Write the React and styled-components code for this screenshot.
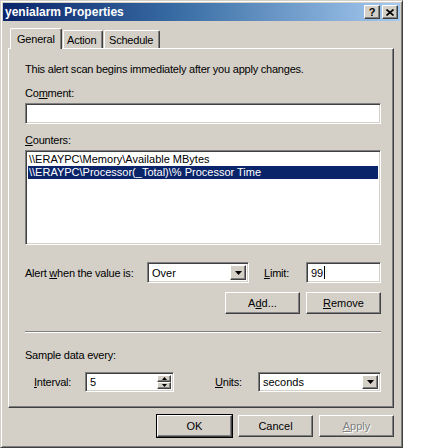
import React from 'react';
import styled, { createGlobalStyle } from 'styled-components';

const Global = createGlobalStyle`
  html, body { margin: 0; padding: 0; background: #ffffff; }
  body { font-family: "Liberation Sans", Arial, sans-serif; font-size: 11px; color: #000; }
  #root { width: 431px; height: 448px; }
  * { box-sizing: border-box; }
`;

const sunken = `
  border: 1px solid;
  border-color: #808080 #ffffff #ffffff #808080;
  box-shadow: inset 1px 1px 0 #404040, inset -1px -1px 0 #d4d0c8;
  background: #ffffff;
`;

const raised = `
  border: 1px solid;
  border-color: #ffffff #404040 #404040 #ffffff;
  box-shadow: inset -1px -1px 0 #808080, inset 1px 1px 0 #d4d0c8;
  background: #d4d0c8;
`;

const Window = styled.div`
  width: 403px;
  height: 448px;
  background: #d4d0c8;
  border: 1px solid;
  border-color: #d4d0c8 #404040 #404040 #d4d0c8;
  box-shadow: inset 1px 1px 0 #ffffff, inset -1px -1px 0 #808080;
  padding: 2px;
  display: flex;
  flex-direction: column;
`;

const TitleBar = styled.div`
  height: 18px;
  display: flex;
  align-items: center;
  justify-content: space-between;
  padding: 0 2px 0 2px;
  background: linear-gradient(to right, #0a246a 0%, #3a6ea5 45%, #a6caf0 100%);
`;

const Title = styled.span`
  color: #ffffff;
  font-weight: bold;
  font-size: 12px;
`;

const TitleButtons = styled.div`
  display: flex;
  gap: 2px;
`;

const TitleButton = styled.div`
  ${raised}
  width: 16px;
  height: 14px;
  display: flex;
  align-items: center;
  justify-content: center;
  font-weight: bold;
  font-size: 11px;
  line-height: 1;
  color: #000;
`;

const TabStrip = styled.div`
  margin: 7px 6px 0 5px;
  height: 20px;
  display: flex;
  align-items: flex-end;
  padding-left: 2px;
  position: relative;
  z-index: 1;
  letter-spacing: -0.2px;
`;

const Tab = styled.div`
  width: ${p => p.w}px;
  height: ${p => (p.active ? 21 : 18)}px;
  margin-bottom: ${p => (p.active ? -1 : 0)}px;
  margin-right: 1px;
  padding-left: ${p => p.pad}px;
  display: flex;
  align-items: ${p => (p.active ? 'flex-start' : 'center')};
  padding-top: ${p => (p.active ? 4 : 0)}px;
  background: #d4d0c8;
  border-top: 1px solid #ffffff;
  border-left: 1px solid #ffffff;
  border-right: 1px solid #404040;
  box-shadow: inset -1px 0 0 #808080;
  border-radius: 2px 2px 0 0;
`;

const Panel = styled.div`
  margin: 0 6px 0 5px;
  height: 360px;
  border: 1px solid;
  border-color: #ffffff #404040 #404040 #ffffff;
  box-shadow: inset -1px -1px 0 #808080;
  padding: 14px 12px 0 16px;
  display: flex;
  flex-direction: column;
  letter-spacing: -0.22px;
`;

const Text = styled.div`
  line-height: 13px;
  height: 13px;
  margin-top: ${p => p.mt || 0}px;
  white-space: nowrap;
`;

const Field = styled.div`
  ${sunken}
  height: ${p => p.h || 21}px;
  width: ${p => (p.w ? `${p.w}px` : 'auto')};
  margin-top: ${p => p.mt || 0}px;
  flex-shrink: 0;
  position: relative;
  display: flex;
  align-items: center;
  padding-left: 4px;
  white-space: nowrap;
  letter-spacing: 0;
`;

const ListBox = styled.div`
  ${sunken}
  height: 95px;
  margin-top: 3px;
  padding: 2px 2px;
  display: flex;
  flex-direction: column;
  letter-spacing: 0;
`;

const ListItem = styled.div`
  height: 13px;
  line-height: 13px;
  padding-left: 1px;
  white-space: nowrap;
  background: ${p => (p.selected ? '#0a246a' : 'transparent')};
  color: ${p => (p.selected ? '#ffffff' : '#000000')};
`;

const Row = styled.div`
  display: flex;
  align-items: center;
  height: ${p => p.h || 21}px;
  margin-top: ${p => p.mt || 0}px;
  padding-left: ${p => p.pl || 0}px;
  justify-content: ${p => p.justify || 'flex-start'};
  gap: ${p => p.gap || 0}px;
`;

const Label = styled.span`
  width: ${p => p.w}px;
  margin-left: ${p => p.ml || 0}px;
  flex-shrink: 0;
  white-space: nowrap;
`;

const ArrowButton = styled.div`
  ${raised}
  position: absolute;
  right: 2px;
  top: 2px;
  bottom: 2px;
  width: 16px;
  display: flex;
  align-items: center;
  justify-content: center;
`;

const SpinGroup = styled.div`
  position: absolute;
  right: 2px;
  top: 2px;
  bottom: 2px;
  width: 14px;
  display: flex;
  flex-direction: column;
`;

const SpinButton = styled.div`
  ${raised}
  flex: 1;
  display: flex;
  align-items: center;
  justify-content: center;
`;

const Button = styled.div`
  ${raised}
  width: 75px;
  height: ${p => p.h || 22}px;
  display: flex;
  align-items: center;
  justify-content: center;
  letter-spacing: 0;
  color: ${p => (p.disabled ? '#808080' : '#000')};
  text-shadow: ${p => (p.disabled ? '1px 1px 0 #ffffff' : 'none')};
  outline: ${p => (p.def ? '1px solid #000' : 'none')};
  outline-offset: 0;
`;

const Separator = styled.div`
  margin-top: 17px;
  border-top: 1px solid #808080;
  border-bottom: 1px solid #ffffff;
`;

const Footer = styled.div`
  display: flex;
  justify-content: flex-end;
  gap: 6px;
  margin: 7px 6px 0 0;
`;

const Caret = styled.span`
  display: inline-block;
  width: 1px;
  height: 13px;
  background: #000;
  margin-left: 1px;
`;

const Down = () => (
  <svg width="7" height="4" viewBox="0 0 7 4"><path d="M0 0h7L3.5 4z" fill="#000" /></svg>
);
const Tri = ({ up }) => (
  <svg width="5" height="3" viewBox="0 0 5 3">
    <path d={up ? 'M2.5 0L5 3H0z' : 'M0 0h5L2.5 3z'} fill="#000" />
  </svg>
);

export default function App() {
  return (
    <>
      <Global />
      <Window>
        <TitleBar>
          <Title>yenialarm Properties</Title>
          <TitleButtons>
            <TitleButton>?</TitleButton>
            <TitleButton>
              <svg width="8" height="7" viewBox="0 0 8 7">
                <path d="M0.5 0.5L7.5 6.5M7.5 0.5L0.5 6.5" stroke="#000" strokeWidth="1.6" />
              </svg>
            </TitleButton>
          </TitleButtons>
        </TitleBar>

        <TabStrip>
          <Tab active w={52} pad={6}>General</Tab>
          <Tab w={40} pad={3}>Action</Tab>
          <Tab w={56} pad={4}>Schedule</Tab>
        </TabStrip>

        <Panel>
          <Text>This alert scan begins immediately after you apply changes.</Text>
          <Text mt={11}>Co<u>m</u>ment:</Text>
          <Field mt={3} />
          <Text mt={10}><u>C</u>ounters:</Text>
          <ListBox>
            <ListItem>\\ERAYPC\Memory\Available MBytes</ListItem>
            <ListItem selected>\\ERAYPC\Processor(_Total)\% Processor Time</ListItem>
          </ListBox>

          <Row mt={17}>
            <Label w={122}>Alert <u>w</u>hen the value is:</Label>
            <Field w={102}>
              Over
              <ArrowButton><Down /></ArrowButton>
            </Field>
            <Label w={42} ml={15}><u>L</u>imit:</Label>
            <Field w={75}>99<Caret /></Field>
          </Row>

          <Row mt={9} h={22} justify="flex-end" gap={6}>
            <Button>A<u>d</u>d...</Button>
            <Button><u>R</u>emove</Button>
          </Row>

          <Separator />

          <Text mt={16}>Sample data every:</Text>

          <Row mt={10} h={20} pl={9}>
            <Label w={51}><u>I</u>nterval:</Label>
            <Field w={89} h={20}>
              5
              <SpinGroup>
                <SpinButton><Tri up /></SpinButton>
                <SpinButton><Tri /></SpinButton>
              </SpinGroup>
            </Field>
            <Label w={43} ml={41}><u>U</u>nits:</Label>
            <Field w={123} h={20}>
              seconds
              <ArrowButton><Down /></ArrowButton>
            </Field>
          </Row>
        </Panel>

        <Footer>
          <Button def>OK</Button>
          <Button>Cancel</Button>
          <Button disabled><u>A</u>pply</Button>
        </Footer>
      </Window>
    </>
  );
}
